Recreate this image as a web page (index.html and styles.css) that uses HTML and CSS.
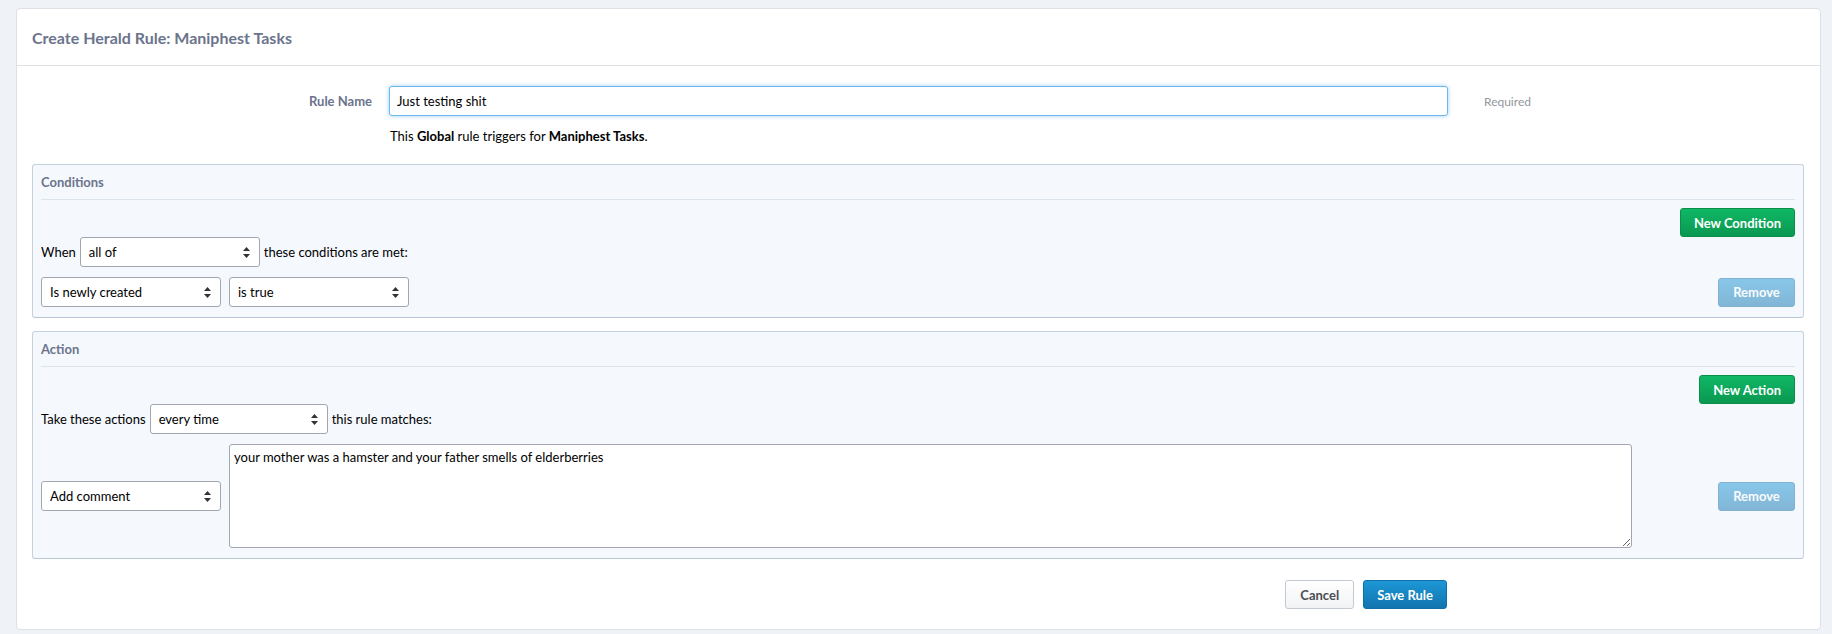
FILE: index.html
```html
<!DOCTYPE html>
<html lang="en">
<head>
    <meta charset="UTF-8">
    <meta name="viewport" content="width=device-width, initial-scale=1.0">
    <title>Create Herald Rule: Maniphest Tasks</title>
    <link rel="stylesheet" href="styles.css">
</head>
<body>

<div class="card">
    <div class="card-header">Create Herald Rule: Maniphest Tasks</div>

    <div class="card-body">
        <div class="form-row">
            <label for="ruleName">Rule Name</label>
            <input type="text" id="ruleName" class="focused" value="Just testing shit">
            <span class="hint">Required</span>
        </div>
        <div class="form-row">
            <span></span>
            <p class="instructions">This <strong>Global</strong> rule triggers for <strong>Maniphest Tasks</strong>.</p>
        </div>

        <!-- conditions -->
        <div class="box">
            <div class="box-header">Conditions</div>
            <div class="box-tools">
                <button class="btn green">New Condition</button>
            </div>
            <div class="inline-row">
                When
                <span class="select-wrap">
                    <select><option>all of</option><option>any of</option></select>
                    <svg class="arrows" width="7" height="11" viewBox="0 0 7 11"><path d="M3.5 0 L7 4 L0 4 Z M0 7 L7 7 L3.5 11 Z" fill="#333"/></svg>
                </span>
                these conditions are met:
            </div>
            <div class="rule-row">
                <span class="select-wrap">
                    <select><option>Is newly created</option></select>
                    <svg class="arrows" width="7" height="11" viewBox="0 0 7 11"><path d="M3.5 0 L7 4 L0 4 Z M0 7 L7 7 L3.5 11 Z" fill="#333"/></svg>
                </span>
                <div class="rule-value">
                    <span class="select-wrap">
                        <select><option>is true</option><option>is false</option></select>
                        <svg class="arrows" width="7" height="11" viewBox="0 0 7 11"><path d="M3.5 0 L7 4 L0 4 Z M0 7 L7 7 L3.5 11 Z" fill="#333"/></svg>
                    </span>
                </div>
                <button class="btn blue disabled">Remove</button>
            </div>
        </div>

        <!-- actions -->
        <div class="box">
            <div class="box-header">Action</div>
            <div class="box-tools">
                <button class="btn green">New Action</button>
            </div>
            <div class="inline-row">
                Take these actions
                <span class="select-wrap">
                    <select class="narrow"><option>every time</option><option>only the first time</option></select>
                    <svg class="arrows" width="7" height="11" viewBox="0 0 7 11"><path d="M3.5 0 L7 4 L0 4 Z M0 7 L7 7 L3.5 11 Z" fill="#333"/></svg>
                </span>
                this rule matches:
            </div>
            <div class="rule-row">
                <span class="select-wrap">
                    <select><option>Add comment</option></select>
                    <svg class="arrows" width="7" height="11" viewBox="0 0 7 11"><path d="M3.5 0 L7 4 L0 4 Z M0 7 L7 7 L3.5 11 Z" fill="#333"/></svg>
                </span>
                <div class="rule-value">
                    <textarea>your mother was a hamster and your father smells of elderberries</textarea>
                </div>
                <button class="btn blue disabled">Remove</button>
            </div>
        </div>

        <div class="form-actions">
            <button class="btn grey">Cancel</button>
            <button class="btn blue">Save Rule</button>
        </div>
    </div>
</div>

</body>
</html>
```

FILE: styles.css
```css
body {
    font-family: Lato, "Open Sans", Arial, sans-serif;
    font-size: 13px;
    color: #000;
    background-color: #eff2f6;
    margin: 8px 11px 0 16px;
}
.card {
    background-color: #fff;
    border: 1px solid #dde1e6;
    border-radius: 4px;
}
.card-header {
    height: 56px;
    display: flex;
    align-items: center;
    padding-left: 15px;
    border-bottom: 1px solid #dde1e6;
    font-size: 16px;
    font-weight: bold;
    color: #6b748c;
}
.card-body {
    padding: 20px 16px 20px 15px;
}
.form-row {
    display: grid;
    grid-template-columns: 357px 1059px auto;
    align-items: center;
}
.form-row label {
    text-align: right;
    padding-right: 17px;
    font-weight: bold;
    color: #6b748c;
}
input[type="text"] {
    height: 30px;
    box-sizing: border-box;
    padding: 0 7px;
    font-family: inherit;
    font-size: 13px;
    border: 1px solid #a1a6b0;
    border-radius: 3px;
    outline: none;
}
input.focused {
    border-color: #6cb8ee;
    box-shadow: 0 0 4px rgba(75, 168, 240, 0.55);
}
.hint {
    padding-left: 36px;
    font-size: 12px;
    color: #92969d;
}
.instructions {
    margin: 11px 0 0 1px;
    line-height: 18px;
}
.box {
    background-color: #f5f8fd;
    border: 1px solid #c5d2dd;
    border-bottom-color: #b8c7d3;
    border-radius: 3px;
    padding: 8px 8px 10px 8px;
    margin-top: 19px;
}
.box + .box {
    margin-top: 13px;
}
.box-header {
    line-height: 18px;
    padding-bottom: 8px;
    border-bottom: 1px solid #dbe4ec;
    font-weight: bold;
    color: #6b748c;
}
.box-tools {
    display: flex;
    justify-content: flex-end;
    margin-top: 8px;
}
.inline-row {
    display: flex;
    align-items: center;
    gap: 4px;
}
.rule-row {
    display: grid;
    grid-template-columns: 180px 1fr 77px;
    column-gap: 8px;
    align-items: center;
    margin-top: 10px;
}
.select-wrap {
    position: relative;
    display: inline-block;
}
select {
    appearance: none;
    -webkit-appearance: none;
    width: 180px;
    height: 30px;
    padding: 0 24px 0 8px;
    font-family: inherit;
    font-size: 13px;
    color: #000;
    background-color: #fff;
    border: 1px solid #a1a6b0;
    border-radius: 3px;
}
select.narrow {
    width: 178px;
}
.arrows {
    position: absolute;
    right: 10px;
    top: 10px;
    pointer-events: none;
}
textarea {
    display: block;
    width: 1403px;
    height: 104px;
    box-sizing: border-box;
    padding: 4px;
    font-family: inherit;
    font-size: 13px;
    border: 1px solid #a1a6b0;
    border-radius: 3px;
}
.btn {
    height: 29px;
    padding: 0 13px;
    font-family: inherit;
    font-size: 13px;
    font-weight: bold;
    color: #fff;
    border-radius: 3px;
    cursor: pointer;
}
.green {
    background: linear-gradient(#10b866, #0a9850);
    border: 1px solid #0a8f4a;
}
.blue {
    background: linear-gradient(#1d97d7, #1174ae);
    border: 1px solid #0f6fa6;
}
.disabled {
    opacity: 0.5;
    cursor: default;
}
.grey {
    background: linear-gradient(#fff, #f1f3f5);
    border: 1px solid #c4cad3;
    color: #4b4d51;
    padding: 0 14px;
}
.form-actions {
    display: flex;
    justify-content: flex-end;
    gap: 9px;
    margin-top: 21px;
    padding-right: 357px;
}
```
